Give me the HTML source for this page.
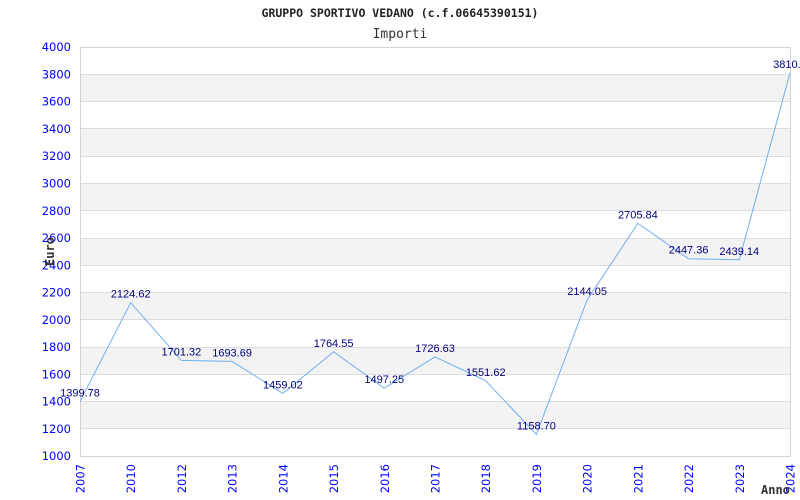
<!DOCTYPE html>
<html><head><meta charset="utf-8"><style>body{margin:0;background:#fff}svg{display:block}</style></head><body>
<svg width="800" height="500" xmlns="http://www.w3.org/2000/svg">
<rect width="800" height="500" fill="#fff"/>
<g fill="#f3f3f3">
<rect x="80" y="74.3" width="710" height="27.3"/>
<rect x="80" y="128.8" width="710" height="27.3"/>
<rect x="80" y="183.3" width="710" height="27.3"/>
<rect x="80" y="237.9" width="710" height="27.3"/>
<rect x="80" y="292.4" width="710" height="27.3"/>
<rect x="80" y="346.9" width="710" height="27.3"/>
<rect x="80" y="401.5" width="710" height="27.3"/>
</g>
<g stroke="#dddddd" stroke-width="1">
<line x1="80" x2="790" y1="74.5" y2="74.5"/><line x1="80" x2="790" y1="101.5" y2="101.5"/>
<line x1="80" x2="790" y1="128.5" y2="128.5"/><line x1="80" x2="790" y1="156.5" y2="156.5"/>
<line x1="80" x2="790" y1="183.5" y2="183.5"/><line x1="80" x2="790" y1="210.5" y2="210.5"/>
<line x1="80" x2="790" y1="238.5" y2="238.5"/><line x1="80" x2="790" y1="265.5" y2="265.5"/>
<line x1="80" x2="790" y1="292.5" y2="292.5"/><line x1="80" x2="790" y1="319.5" y2="319.5"/>
<line x1="80" x2="790" y1="347.5" y2="347.5"/><line x1="80" x2="790" y1="374.5" y2="374.5"/>
<line x1="80" x2="790" y1="401.5" y2="401.5"/><line x1="80" x2="790" y1="428.5" y2="428.5"/>
</g>
<rect x="80.5" y="47.5" width="710" height="409" fill="none" stroke="#d4d4d4"/>
<polyline fill="none" stroke="#70b0f0" stroke-width="1" points="80,401.5 130.7,302.7 181.4,360.4 232.1,361.4 282.9,393.4 333.6,351.8 384.3,388.2 435,356.9 485.7,380.8 536.4,434.4 587.1,300 637.9,223.4 688.6,258.7 739.3,259.8 790,72.9"/>
<g font-family="Liberation Sans, sans-serif" font-size="11" fill="#000080" text-anchor="middle">
<text x="80" y="396.5">1399.78</text><text x="130.7" y="297.7">2124.62</text>
<text x="181.4" y="355.4">1701.32</text><text x="232.1" y="356.4">1693.69</text>
<text x="282.9" y="388.4">1459.02</text><text x="333.6" y="346.8">1764.55</text>
<text x="384.3" y="383.2">1497.25</text><text x="435" y="351.9">1726.63</text>
<text x="485.7" y="375.8">1551.62</text><text x="536.4" y="429.4">1158.70</text>
<text x="587.1" y="295">2144.05</text><text x="637.9" y="218.4">2705.84</text>
<text x="688.6" y="253.7">2447.36</text><text x="739.3" y="254.8">2439.14</text>
<text x="790" y="67.9">3810.1</text>
</g>
<g font-family="DejaVu Sans, sans-serif" font-size="11.5" fill="#0000ff" text-anchor="end">
<text x="71" y="51">4000</text><text x="71" y="78.5">3800</text><text x="71" y="105.5">3600</text>
<text x="71" y="133">3400</text><text x="71" y="160">3200</text><text x="71" y="187.5">3000</text>
<text x="71" y="215">2800</text><text x="71" y="242">2600</text><text x="71" y="269.5">2400</text>
<text x="71" y="296.5">2200</text><text x="71" y="324">2000</text><text x="71" y="351">1800</text>
<text x="71" y="378.5">1600</text><text x="71" y="405.5">1400</text><text x="71" y="433">1200</text>
<text x="71" y="460">1000</text>
</g>
<g font-family="DejaVu Sans, sans-serif" font-size="11.5" fill="#0000ff" text-anchor="end">
<text transform="translate(84.5,464) rotate(-90)">2007</text>
<text transform="translate(135.2,464) rotate(-90)">2010</text>
<text transform="translate(185.9,464) rotate(-90)">2012</text>
<text transform="translate(236.6,464) rotate(-90)">2013</text>
<text transform="translate(287.4,464) rotate(-90)">2014</text>
<text transform="translate(338.1,464) rotate(-90)">2015</text>
<text transform="translate(388.8,464) rotate(-90)">2016</text>
<text transform="translate(439.5,464) rotate(-90)">2017</text>
<text transform="translate(490.2,464) rotate(-90)">2018</text>
<text transform="translate(540.9,464) rotate(-90)">2019</text>
<text transform="translate(591.6,464) rotate(-90)">2020</text>
<text transform="translate(642.4,464) rotate(-90)">2021</text>
<text transform="translate(693.1,464) rotate(-90)">2022</text>
<text transform="translate(743.8,464) rotate(-90)">2023</text>
<text transform="translate(794.5,464) rotate(-90)">2024</text>
</g>
<text x="400" y="17" text-anchor="middle" font-family="DejaVu Sans Mono, Liberation Mono, monospace" font-weight="bold" font-size="11.5" fill="#222">GRUPPO SPORTIVO VEDANO (c.f.06645390151)</text>
<text x="400" y="38" text-anchor="middle" font-family="DejaVu Sans Mono, Liberation Mono, monospace" font-size="13" fill="#333">Importi</text>
<text transform="translate(54,266) rotate(-90)" font-family="DejaVu Sans Mono, monospace" font-weight="bold" font-size="12" fill="#333">Euro</text>
<text x="761" y="494" font-family="DejaVu Sans Mono, monospace" font-weight="bold" font-size="12" fill="#333">Anno</text>
</svg>
</body></html>
